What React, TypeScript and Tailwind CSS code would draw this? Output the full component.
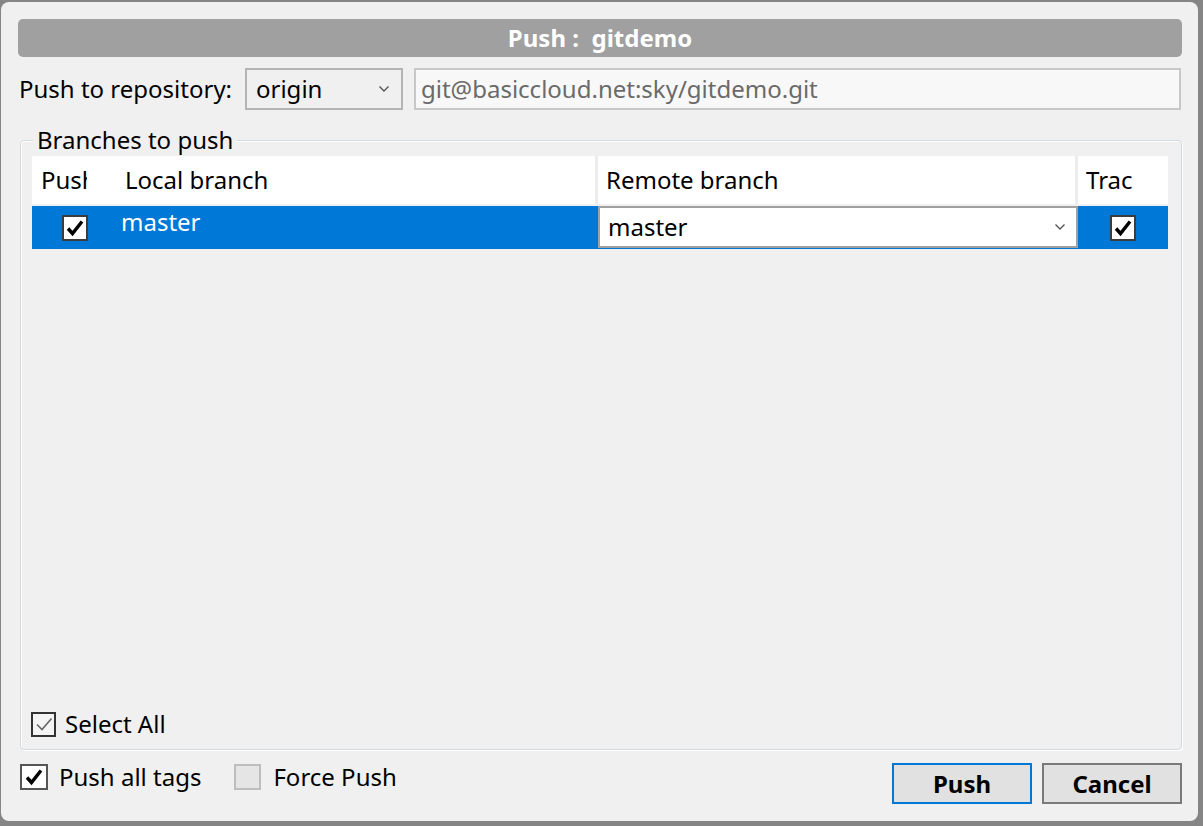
import React from "react";

const F = { fontFamily: '"Noto Sans", "Open Sans", sans-serif' };

function Check({ thin = false, color = "#000" }: { thin?: boolean; color?: string }) {
  return thin ? (
    <svg width="20" height="20" viewBox="0 0 20 20" fill="none">
      <path d="M3 10.5 L8 15.5 L17.5 4.5" stroke={color} strokeWidth="1.6" />
    </svg>
  ) : (
    <svg width="20" height="20" viewBox="0 0 20 20" fill="none">
      <path d="M3 10.5 L7.5 15.5 L17 3.5" stroke={color} strokeWidth="3.4" strokeLinejoin="miter" />
    </svg>
  );
}

function Chevron() {
  return (
    <svg width="12" height="8" viewBox="0 0 12 8" fill="none">
      <path d="M1.5 1.5 L6 6 L10.5 1.5" stroke="#555" strokeWidth="1.4" />
    </svg>
  );
}

export default function App() {
  return (
    <div className="w-[1203px] h-[826px] bg-[#858585] overflow-hidden pt-[2px] pl-[1px]" style={F}>
      <div className="w-[1197px] h-[819px] bg-[#f0f0f0] rounded-[8px] flex flex-col text-[24px] leading-[32px] text-black">
        {/* Title */}
        <div className="ml-[17px] mt-[17px] w-[1164px] h-[38px] bg-[#a0a0a0] rounded-[5px] flex items-center justify-center text-white font-bold text-[24px] whitespace-pre">
          Push :  gitdemo
        </div>
        {/* Repo row */}
        <div className="flex items-center mt-[11px] h-[42px] ml-[18px]">
          <span className="w-[226px] whitespace-nowrap">Push to repository:</span>
          <div className="w-[158px] h-[42px] border-2 border-[#b4b4b4] bg-[#f0f0f0] flex items-center justify-between pl-[9px] pr-[11px]">
            <span>origin</span>
            <Chevron />
          </div>
          <div className="ml-[11px] w-[767px] h-[42px] border-2 border-[#c8c8c8] bg-[#f8f8f8] flex items-center pl-[5px] text-[#6a6a6a]">
            git@basiccloud.net:sky/gitdemo.git
          </div>
        </div>
        {/* Group box */}
        <div className="relative ml-[19px] mt-[30px] w-[1162px] h-[610px] border border-[#d3dbe1] rounded-[4px] shadow-[inset_1px_1px_0_#fff,1px_1px_0_#fff] flex flex-col">
          <div className="absolute left-[12px] top-[-17px] bg-[#f0f0f0] px-[4px] leading-[32px]">Branches to push</div>
          {/* Table */}
          <div className="ml-[11px] mt-[15px] w-[1136px] flex flex-col">
            <div className="h-[50px] bg-white flex border-b-2 border-[#f0f0f0]">
              <div className="w-[85px] flex items-center pl-[9px]">
                <div className="w-[46px] overflow-hidden whitespace-nowrap">Push</div>
              </div>
              <div className="w-[481px] flex items-center pl-[8px] border-r-[3px] border-[#ececec]">Local branch</div>
              <div className="w-[480px] flex items-center pl-[8px] border-r-[3px] border-[#ececec]">Remote branch</div>
              <div className="flex-1 flex items-center pl-[8px]">
                <div className="w-[47px] overflow-hidden whitespace-nowrap">Track</div>
              </div>
            </div>
            <div className="h-[43px] bg-[#0078d7] flex">
              <div className="w-[85px] flex items-center justify-center">
                <div className="w-[26px] h-[26px] border-2 border-[#3c3c3c] bg-white flex items-center justify-center">
                  <Check />
                </div>
              </div>
              <div className="w-[481px] pl-[4px] pt-[1px] text-white leading-[30px]">master</div>
              <div className="w-[480px] h-[42px] bg-white border-2 border-[#a0a0a0] flex items-center justify-between pl-[8px] pr-[10px]">
                <span>master</span>
                <Chevron />
              </div>
              <div className="flex-1 flex items-center justify-center">
                <div className="w-[26px] h-[26px] border-2 border-[#3c3c3c] bg-white flex items-center justify-center">
                  <Check />
                </div>
              </div>
            </div>
          </div>
          <div className="flex-1" />
          <div className="flex items-center ml-[10px] mb-[9px] gap-[9px]">
            <div className="w-[25px] h-[25px] border-2 border-[#333] bg-[#f4f4f4] flex items-center justify-center">
              <Check thin color="#666" />
            </div>
            <span>Select All</span>
          </div>
        </div>
        {/* Bottom row */}
        <div className="flex items-start mt-[13px] ml-[19px] w-[1162px]">
          <div className="flex items-center mt-[1px] h-[26px]">
            <div className="w-[28px] h-[26px] border-2 border-[#555] bg-white flex items-center justify-center">
              <Check />
            </div>
            <span className="ml-[11px] whitespace-nowrap">Push all tags</span>
            <div className="ml-[33px] w-[27px] h-[26px] border-2 border-[#bdbdbd] bg-[#e5e5e5]" />
            <span className="ml-[12px] whitespace-nowrap">Force Push</span>
          </div>
          <div className="flex-1" />
          <button className="w-[140px] h-[41px] border-2 border-[#0078d7] bg-[#e1e1e1] font-bold">Push</button>
          <button className="ml-[10px] w-[140px] h-[41px] border-2 border-[#7a7a7a] bg-[#e1e1e1] font-bold">Cancel</button>
        </div>
      </div>
    </div>
  );
}
